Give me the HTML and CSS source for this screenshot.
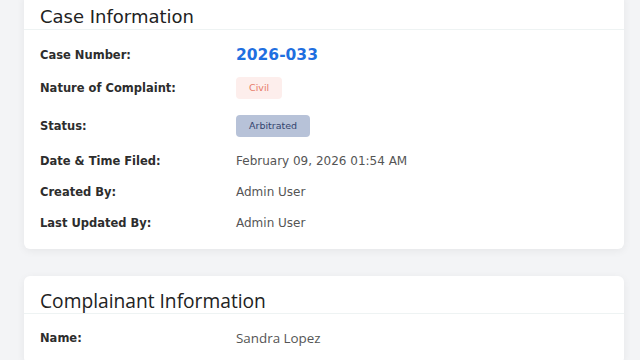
FILE: index.html
```html
<!DOCTYPE html>
<html lang="en">
<head>
    <meta charset="UTF-8">
    <meta name="viewport" content="width=device-width, initial-scale=1.0">
    <title>Case 2026-033</title>
    <link rel="stylesheet" href="styles.css">
</head>
<body>
    <div class="content">
        <div class="card">
            <div class="card-header">
                <h2>Case Information</h2>
            </div>
            <div class="card-body">
                <div class="row first-row">
                    <div class="label">Case Number:</div>
                    <div class="value case-no">2026-033</div>
                </div>
                <div class="row badge-row">
                    <div class="label">Nature of Complaint:</div>
                    <div class="value"><span class="badge badge-civil">Civil</span></div>
                </div>
                <div class="row badge-row">
                    <div class="label">Status:</div>
                    <div class="value"><span class="badge badge-status">Arbitrated</span></div>
                </div>
                <div class="row">
                    <div class="label">Date &amp; Time Filed:</div>
                    <div class="value">February 09, 2026 01:54 AM</div>
                </div>
                <div class="row">
                    <div class="label">Created By:</div>
                    <div class="value">Admin User</div>
                </div>
                <div class="row">
                    <div class="label">Last Updated By:</div>
                    <div class="value">Admin User</div>
                </div>
            </div>
        </div>

        <div class="card alt">
            <div class="card-header">
                <h2>Complainant Information</h2>
            </div>
            <div class="card-body">
                <div class="row">
                    <div class="label">Name:</div>
                    <div class="value">Sandra Lopez</div>
                </div>
            </div>
        </div>
    </div>
</body>
</html>
```

FILE: styles.css
```css
body {
    margin: 0;
    background: #f3f4f6;
    font-family: "DejaVu Sans", "Open Sans", sans-serif;
    color: #333;
}
.content {
    margin-top: -8px;
    padding: 0 16px 0 24px;
}
.card {
    background: white;
    border-radius: 6px;
    box-shadow: 0 2px 8px rgba(0,0,0,0.06);
    margin-bottom: 27px;
}
.card-header {
    padding: 15px 16px 2px;
    border-bottom: 1px solid #eef3f3;
}
.card-header h2 {
    margin: 0;
    font-size: 18px;
    font-weight: 500;
    line-height: 20px;
    color: #222;
}
.card-body {
    padding: 11px 16px;
}
.row {
    display: flex;
    align-items: center;
    padding: 7.5px 0;
    line-height: 16px;
}
.first-row {
    padding: 6px 0;
}
.badge-row {
    padding: 8px 0;
}
.label {
    width: 196px;
    font-size: 11.5px;
    font-weight: bold;
    color: #2d2d2d;
}
.value {
    font-size: 12px;
    color: #555;
}
.case-no {
    font-size: 15.5px;
    font-weight: bold;
    color: #1f6fe0;
}
.badge {
    display: inline-block;
    padding: 3px 13px;
    border-radius: 4px;
    font-size: 9.5px;
    line-height: 16px;
}
.badge-civil {
    background: #fdeeec;
    color: #e77a68;
}
.badge-status {
    background: #b7c2d8;
    color: #34446e;
}
.alt .card-header h2 {
    font-family: "Open Sans", sans-serif;
    font-size: 19.2px;
    font-weight: 400;
}
.alt .card-body {
    padding-top: 8px;
}
.alt .value {
    font-family: "Open Sans", sans-serif;
    font-size: 13.4px;
}
```
